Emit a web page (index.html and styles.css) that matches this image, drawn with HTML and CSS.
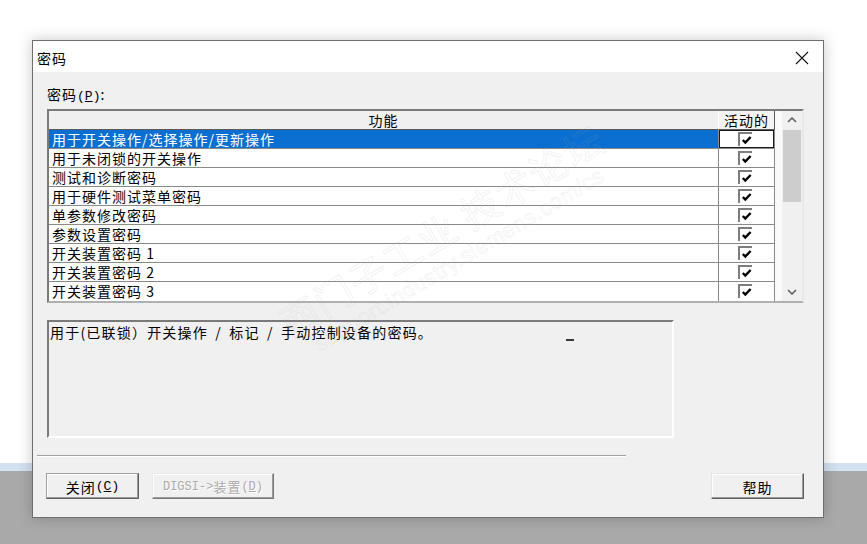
FILE: index.html
```html
<!DOCTYPE html>
<html lang="zh-CN">
<head>
<meta charset="utf-8">
<title>密码</title>
<link rel="stylesheet" href="styles.css">
</head>
<body>
<div class="dialog">
  <div class="titlebar">
    <span class="title">密码</span>
    <span class="close"><svg width="14" height="14" viewBox="0 0 14 14"><path d="M1 1 L13 13 M13 1 L1 13" stroke="#111" stroke-width="1.1" fill="none"/></svg></span>
  </div>
  <div class="content">
    <div class="label">密码<span class="mono">(<u>P</u>)</span>:</div>
    <div class="table">
      <div class="grid">
        <div class="hdr fn">功能</div><div class="hdr chk">活动的</div>
        <div class="cell fn sel">用于开关操作/选择操作/更新操作</div><div class="cell chk focus"><span class="box"><svg width="11" height="11" viewBox="0 0 11 11"><path d="M1.8 5 L4.3 7.6 L9.6 2" stroke="#000" stroke-width="2.4" fill="none"/></svg></span></div>
        <div class="cell fn">用于未闭锁的开关操作</div><div class="cell chk"><span class="box"><svg width="11" height="11" viewBox="0 0 11 11"><path d="M1.8 5 L4.3 7.6 L9.6 2" stroke="#000" stroke-width="2.4" fill="none"/></svg></span></div>
        <div class="cell fn">测试和诊断密码</div><div class="cell chk"><span class="box"><svg width="11" height="11" viewBox="0 0 11 11"><path d="M1.8 5 L4.3 7.6 L9.6 2" stroke="#000" stroke-width="2.4" fill="none"/></svg></span></div>
        <div class="cell fn">用于硬件测试菜单密码</div><div class="cell chk"><span class="box"><svg width="11" height="11" viewBox="0 0 11 11"><path d="M1.8 5 L4.3 7.6 L9.6 2" stroke="#000" stroke-width="2.4" fill="none"/></svg></span></div>
        <div class="cell fn">单参数修改密码</div><div class="cell chk"><span class="box"><svg width="11" height="11" viewBox="0 0 11 11"><path d="M1.8 5 L4.3 7.6 L9.6 2" stroke="#000" stroke-width="2.4" fill="none"/></svg></span></div>
        <div class="cell fn">参数设置密码</div><div class="cell chk"><span class="box"><svg width="11" height="11" viewBox="0 0 11 11"><path d="M1.8 5 L4.3 7.6 L9.6 2" stroke="#000" stroke-width="2.4" fill="none"/></svg></span></div>
        <div class="cell fn">开关装置密码 1</div><div class="cell chk"><span class="box"><svg width="11" height="11" viewBox="0 0 11 11"><path d="M1.8 5 L4.3 7.6 L9.6 2" stroke="#000" stroke-width="2.4" fill="none"/></svg></span></div>
        <div class="cell fn">开关装置密码 2</div><div class="cell chk"><span class="box"><svg width="11" height="11" viewBox="0 0 11 11"><path d="M1.8 5 L4.3 7.6 L9.6 2" stroke="#000" stroke-width="2.4" fill="none"/></svg></span></div>
        <div class="cell fn last">开关装置密码 3</div><div class="cell chk last"><span class="box"><svg width="11" height="11" viewBox="0 0 11 11"><path d="M1.8 5 L4.3 7.6 L9.6 2" stroke="#000" stroke-width="2.4" fill="none"/></svg></span></div>
      </div>
      <div class="gap"></div>
      <div class="scroll">
        <div class="arrow"><svg width="10" height="6" viewBox="0 0 10 6"><path d="M1 5 L5 1 L9 5" stroke="#606060" stroke-width="1.6" fill="none"/></svg></div>
        <div class="thumb"></div>
        <div class="track"></div>
        <div class="arrow"><svg width="10" height="6" viewBox="0 0 10 6"><path d="M1 1 L5 5 L9 1" stroke="#606060" stroke-width="1.6" fill="none"/></svg></div>
      </div>
    </div>
    <div class="desc">用于(已联锁）开关操作 / 标记 / 手动控制设备的密码。<span class="caret"></span></div>
    <div class="sep"></div>
    <div class="buttons">
      <div class="btn btn-default">关闭<span class="mono">(<u>C</u>)</span></div>
      <div class="btn btn-disabled"><span class="mono">DIGSI-&gt;</span>装置<span class="mono">(<u>D</u>)</span></div>
      <div class="btn btn-help">帮助</div>
    </div>
  </div>
  <div class="watermark">
    <div class="wm-cn">西门子工业 技术论坛</div>
    <div class="wm-url">support.industry.siemens.com/cs</div>
  </div>
</div>
</body>
</html>
```
FILE: styles.css
```css
html, body {
  margin: 0;
  padding: 0;
}
body {
  width: 867px;
  height: 544px;
  overflow: hidden;
  background: linear-gradient(to bottom, #ffffff 0, #ffffff 463px, #d3e2f1 463px, #d3e2f1 471px, #a9a9a9 471px, #a9a9a9 100%);
  font-family: "Noto Sans CJK SC", "Noto Sans", sans-serif;
  font-size: 14px;
  color: #000;
  padding-top: 40px;
  box-sizing: border-box;
}
.dialog {
  position: relative;
  margin-left: 32px;
  width: 790px;
  height: 476px;
  border: 1px solid #6f6f6f;
  background: #f0f0f0;
  box-shadow: 0 0 14px rgba(0, 0, 0, 0.22);
  overflow: hidden;
}
.titlebar {
  height: 31px;
  background: #ffffff;
  display: flex;
  align-items: center;
  justify-content: space-between;
  padding: 0 14px 0 4px;
}
.title {
  letter-spacing: 1px;
  line-height: 20px;
  margin-top: 2px;
}
.close {
  display: flex;
  margin-top: 3px;
}
.content {
  padding: 12px 18px 0 14px;
  display: flex;
  flex-direction: column;
}
.mono {
  font-family: "Liberation Mono", "DejaVu Sans Mono", monospace;
  font-size: 13px;
  letter-spacing: 0;
}
.label {
  height: 20px;
  line-height: 20px;
  letter-spacing: 1px;
}
.table {
  margin-top: 5px;
  width: 753px;
  border: 2px solid;
  border-color: #7a7a7a #e8e8e8 #b0b0b0 #7a7a7a;
  display: flex;
  background: #ffffff;
}
.grid {
  display: grid;
  grid-template-columns: 670px 56px;
  grid-auto-rows: 19px;
  grid-template-rows: 19px;
}
.hdr {
  background: #f0f0f0;
  line-height: 18px;
  text-align: center;
  letter-spacing: 1px;
  border-bottom: 1px solid #5a5a5a;
}
.hdr.fn {
  border-right: 1px solid #c8c8c8;
}
.hdr.chk {
  border-right: 1px solid #5a5a5a;
  border-left: 1px solid #ffffff;
  margin-left: -1px;
  background: #f3f3f3;
}
.cell {
  border-bottom: 1px solid #8a8a8a;
  background: #ffffff;
  line-height: 18px;
}
.cell.last {
  border-bottom: none;
}
.cell.fn {
  border-right: 1px solid #8a8a8a;
  padding-left: 3px;
  letter-spacing: 1px;
  white-space: nowrap;
}
.cell.chk {
  border-right: 1px solid #8a8a8a;
  display: flex;
  justify-content: center;
  align-items: flex-start;
  padding-top: 2px;
  box-sizing: border-box;
}
.cell.sel {
  background: #0a6fd0;
  color: #ffffff;
}
.cell.focus {
  box-shadow: inset -1px -1px 0 #1a1a1a, inset 1px 1px 0 #1a1a1a;
}
.box {
  width: 12px;
  height: 12px;
  border-top: 2px solid #7d7d7d;
  border-left: 2px solid #7d7d7d;
  background: #ffffff;
  display: flex;
  align-items: center;
  justify-content: center;
  margin-left: -3px;
}
.gap {
  width: 7px;
  background: #fafafa;
}
.scroll {
  width: 20px;
  background: #f0f0f0;
  display: flex;
  flex-direction: column;
}
.arrow {
  height: 18px;
  display: flex;
  align-items: center;
  justify-content: center;
}
.thumb {
  margin: 1px 1px 0 1px;
  height: 72px;
  background: #cdcdcd;
}
.track {
  flex: 1;
}
.desc {
  position: relative;
  margin-top: 17px;
  width: 622px;
  height: 114px;
  border: 2px solid;
  border-color: #7a7a7a #ffffff #ffffff #7a7a7a;
  padding: 0 0 0 1px;
  line-height: 20px;
  letter-spacing: 1.2px;
  word-spacing: 3px;
  white-space: nowrap;
}
.caret {
  position: absolute;
  left: 517px;
  top: 17px;
  width: 8px;
  height: 2px;
  background: #3a3a3a;
}
.sep {
  margin-top: 17px;
  margin-left: -10px;
  width: 589px;
  height: 0;
  border-top: 1px solid #a0a0a0;
  border-bottom: 1px solid #ffffff;
}
.buttons {
  margin-top: 16px;
  margin-left: -1px;
  margin-right: 1px;
  display: flex;
  gap: 13px;
}
.btn {
  height: 26px;
  box-sizing: border-box;
  display: flex;
  align-items: center;
  justify-content: center;
  background: #f0f0f0;
  border: 1px solid;
  border-color: #a0a0a0 #5e5e5e #5e5e5e #a0a0a0;
  box-shadow: inset -1px -1px 0 #9a9a9a, inset 1px 1px 0 #ffffff;
  letter-spacing: 1px;
  padding-top: 1px;
}
.btn-default {
  width: 93px;
}
.btn-disabled {
  width: 122px;
  color: #aaaaaa;
  text-shadow: 1px 1px 0 #ffffff;
  border-color: #e8e8e8 #7a7a7a #7a7a7a #e8e8e8;
  font-size: 13px;
}
.btn-disabled .mono {
  font-size: 12px;
}
.btn-help {
  width: 93px;
  margin-left: auto;
  border-color: #e4e4e4 #5e5e5e #5e5e5e #e4e4e4;
}
.watermark {
  position: absolute;
  left: 205px;
  top: 165px;
  width: 420px;
  transform: rotate(-31deg);
  pointer-events: none;
  text-align: center;
}
.wm-cn {
  font-size: 38px;
  line-height: 44px;
  color: transparent;
  -webkit-text-stroke: 1px rgba(170, 170, 170, 0.16);
  letter-spacing: 2px;
}
.wm-url {
  font-family: "Liberation Sans", sans-serif;
  font-size: 22px;
  line-height: 26px;
  color: transparent;
  -webkit-text-stroke: 0.8px rgba(170, 170, 170, 0.16);
  letter-spacing: 0.5px;
}
```
